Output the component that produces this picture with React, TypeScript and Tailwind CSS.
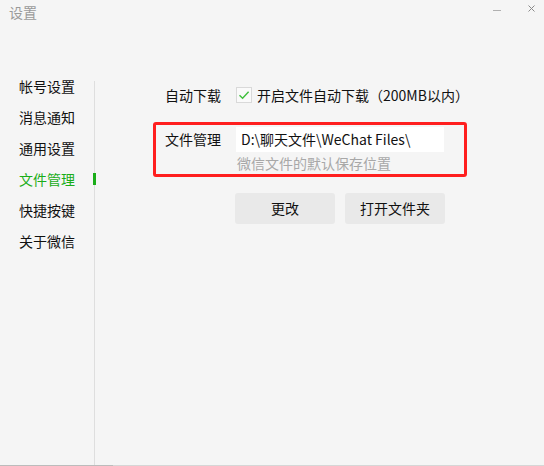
const navItems = ["帐号设置", "消息通知", "通用设置", "文件管理", "快捷按键", "关于微信"];
const activeItem = "文件管理";

function TitleBar() {
  return (
    <div className="flex h-[76px] shrink-0 items-start justify-between">
      <span className="ml-[9px] mt-[3px] text-[14px] leading-[18px] text-[#9a9a9a]">设置</span>
      <div className="mr-[9px] mt-[5px] flex items-center gap-[27px]">
        <span className="mt-[3px] block h-px w-[8px] bg-[#b0b0b0]" />
        <svg width="7" height="7" viewBox="0 0 7 7" className="text-[#8a8a8a]">
          <path d="M0.5 0.5 L6.5 6.5 M6.5 0.5 L0.5 6.5" stroke="currentColor" strokeWidth="1" />
        </svg>
      </div>
    </div>
  );
}

function Sidebar() {
  return (
    <div className="flex w-[95px] shrink-0">
      <nav className="flex w-[94px] flex-col gap-[11px]">
        {navItems.map((item) => {
          const active = item === activeItem;
          return (
            <div key={item} className="relative h-[20px] pl-[19px] text-[14px] leading-[20px]">
              <span className={active ? "text-[#1aad19]" : "text-[#111]"}>{item}</span>
              {active && <span className="absolute left-[93px] top-[4px] h-[12px] w-[3px] bg-[#1aad19]" />}
            </div>
          );
        })}
      </nav>
      <div className="mt-[5px] w-px bg-[#dedede]" />
    </div>
  );
}

function Content() {
  return (
    <div className="relative flex-1 pl-[70px] pt-[9px]">
      <div className="flex h-[20px] items-center text-[14px] text-[#111]">
        <span className="w-[71px]">自动下载</span>
        <span className="flex h-[16px] w-[16px] items-center justify-center border border-[#d9d9d9] bg-[#fafafa]">
          <svg width="12" height="12" viewBox="0 0 12 12">
            <path d="M1.5 6.2 L4.6 9.2 L10.6 2.8" fill="none" stroke="#3fbf3c" strokeWidth="1.4" />
          </svg>
        </span>
        <span className="ml-[5px]">开启文件自动下载（200MB以内）</span>
      </div>

      <div className="mt-[22px] flex h-[25px] items-center text-[14px] text-[#111]">
        <span className="w-[71px]">文件管理</span>
        <div className="flex h-[25px] w-[208px] items-center bg-white pl-[5px] text-[14px] text-[#111]">
          D:\聊天文件\WeChat Files\
        </div>
      </div>
      <div className="ml-[71px] mt-[2px] h-[18px] pl-px text-[14px] leading-[18px] text-[#a8a8a8]">
        微信文件的默认保存位置
      </div>

      <div className="ml-[70px] mt-[21px] flex gap-[10px]">
        <button type="button" className="h-[31px] w-[100px] rounded-[3px] bg-[#e9e9e9] text-[14px] text-[#111]">
          更改
        </button>
        <button type="button" className="h-[31px] w-[100px] rounded-[3px] bg-[#e9e9e9] text-[14px] text-[#111]">
          打开文件夹
        </button>
      </div>

      {/* red annotation box */}
      <div className="pointer-events-none absolute left-[58px] top-[46px] h-[55px] w-[314px] rounded-[3px] border-[3px] border-[#ff1f1f]" />
    </div>
  );
}

export default function App() {
  return (
    <div
      className="flex h-[466px] w-[544px] flex-col overflow-hidden bg-[#f5f5f5]"
      style={{ fontFamily: '"Noto Sans CJK SC", "Liberation Sans", sans-serif' }}
    >
      <TitleBar />
      <div className="flex flex-1">
        <Sidebar />
        <Content />
      </div>
      <div className="flex h-px shrink-0">
        <div className="w-[113px] bg-[#bcbcbc]" />
        <div className="flex-1 bg-[#d6d6d6]" />
      </div>
    </div>
  );
}
